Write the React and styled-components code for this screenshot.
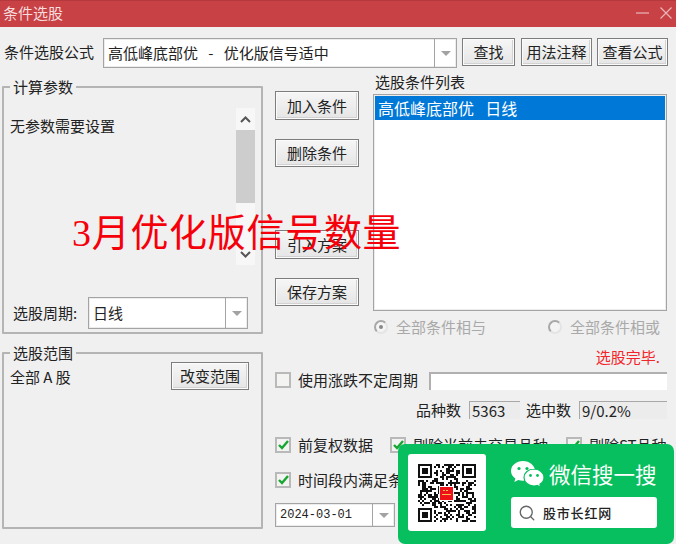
import React from "react";
import styled, { createGlobalStyle } from "styled-components";
import { Search } from "lucide-react";

const GlobalStyle = createGlobalStyle`
  html, body { margin: 0; padding: 0; background: #f0f0f0; }
  * { box-sizing: border-box; }
`;

const Dialog = styled.div`
  position: relative;
  width: 676px;
  height: 544px;
  overflow: hidden;
  background: #f0f0f0;
  color: #222;
  font: 15px/20px "Noto Sans CJK SC", "Liberation Sans", sans-serif;
`;

const TitleBar = styled.header`
  height: 27px;
  display: flex;
  align-items: center;
  justify-content: space-between;
  padding: 0 4px 2px 3px;
  background: #c84145;
  border-top: 1px solid #b5383c;
  color: #f6dcdc;
`;

const WindowControls = styled.div`
  display: flex;
  align-items: center;
  gap: 10px;
  color: #e9b6b8;
`;

const Toolbar = styled.div`
  height: 45px;
  display: flex;
  align-items: flex-start;
  padding: 11px 0 0 4px;
`;

const ToolbarLabel = styled.span`
  width: 99px;
  line-height: 28px;
`;

const Combo = styled.div`
  display: flex;
  align-items: stretch;
  width: ${(p) => p.$width}px;
  height: ${(p) => p.$height}px;
  background: #fff;
  border: 1px solid #a4a4a4;
  box-shadow: inset 0 0 0 1px #ececec;
`;

const ComboValue = styled.span`
  flex: 1;
  padding-left: 4px;
  white-space: pre;
  word-spacing: ${(p) => (p.$mono ? 0 : 1.75)}px;
  align-self: center;
  font-family: ${(p) => (p.$mono ? '"Liberation Mono", monospace' : "inherit")};
  font-size: ${(p) => (p.$mono ? "12px" : "15px")};
`;

const ComboArrow = styled.span`
  width: 22px;
  flex: none;
  border-left: 1px solid #a4a4a4;
  display: flex;
  align-items: center;
  justify-content: center;
  &::after {
    content: "";
    border-left: 5px solid transparent;
    border-right: 5px solid transparent;
    border-top: 5px solid #a2a2a2;
  }
`;

const Button = styled.button`
  flex: none;
  padding: 0;
  width: ${(p) => p.$width}px;
  height: ${(p) => p.$height || 28}px;
  margin-left: ${(p) => p.$gap || 0}px;
  border: 1px solid #7d7d7d;
  box-shadow: inset 0 0 0 1px #fbfbfb, inset -1px -1px 0 1px #d2d2d2;
  background: linear-gradient(#f6f6f6, #e5e5e5);
  color: #222;
  font: inherit;
`;

const Body = styled.div`
  display: flex;
  padding-left: 2px;
`;

const LeftColumn = styled.div`
  width: 261px;
  padding-top: 5px;
  display: flex;
  flex-direction: column;
  gap: 9px;
`;

const Group = styled.fieldset`
  margin: 0;
  min-width: 0;
  height: ${(p) => p.$height}px;
  padding: ${(p) => p.$top}px 6px 0 6px;
  border: 2px solid #b4b4b4;
  border-radius: 1px;
`;

const GroupTitle = styled.legend`
  margin-left: 0;
  padding: 0 3px;
  line-height: 20px;
`;

const ParamPane = styled.div`
  display: flex;
  justify-content: space-between;
  height: 157px;
`;

const ParamNote = styled.span`
  margin-top: 8px;
`;

const ScrollBar = styled.div`
  width: 19px;
  display: flex;
  flex-direction: column;
  background: #f7f7f7;
`;

const ScrollStep = styled.div`
  height: 22px;
  display: flex;
  align-items: center;
  justify-content: center;
  color: #555;
`;

const ScrollThumb = styled.div`
  height: 73px;
  background: #cdcdcd;
`;

const ScrollRest = styled.div`
  flex: 1;
`;

const PeriodRow = styled.div`
  display: flex;
  align-items: center;
  margin-top: 32px;
  padding-left: 3px;
`;

const PeriodLabel = styled.span`
  width: 75px;
`;

const RangeRow = styled.div`
  display: flex;
  justify-content: space-between;
  align-items: flex-start;
  margin-top: -1px;
  padding-right: 6px;
`;

const RangeText = styled.span`
  margin-top: 5px;
  white-space: pre;
`;

const RightRegion = styled.div`
  width: 392px;
  margin-left: 12px;
`;

const TopSection = styled.div`
  display: flex;
`;

const ActionColumn = styled.div`
  width: 84px;
  padding-top: 19px;
  display: flex;
  flex-direction: column;
  gap: 63px;
`;

const ActionGroup = styled.div`
  display: flex;
  flex-direction: column;
  gap: 19px;
`;

const ListPane = styled.div`
  width: 294px;
  margin-left: 14px;
`;

const ListLabel = styled.div`
  padding-left: 2px;
`;

const ListBox = styled.div`
  height: 217px;
  margin-top: 2px;
  padding: 1px;
  background: #fff;
  border: 1px solid #a4a4a4;
  box-shadow: inset 0 0 0 1px #ececec;
`;

const ListItem = styled.div`
  height: 24px;
  padding-left: 3px;
  background: #0078d7;
  color: #fff;
  font-size: 16px;
  line-height: 24px;
  white-space: pre;
  word-spacing: 2px;
`;

const RadioRow = styled.div`
  display: flex;
  margin: 6px 0 0 99px;
  color: #a9a9a9;
`;

const RadioOption = styled.div`
  display: flex;
  align-items: center;
  gap: 8px;
  width: ${(p) => p.$width}px;
`;

const RadioDot = styled.span`
  width: 14px;
  height: 14px;
  border-radius: 50%;
  border: 2px solid #a8a8a8;
  border-right-color: #e4e4e4;
  border-bottom-color: #e4e4e4;
  background: #f4f4f4;
  display: flex;
  align-items: center;
  justify-content: center;
  &::after {
    content: "";
    width: 4px;
    height: 4px;
    border-radius: 50%;
    background: ${(p) => (p.$on ? "#888" : "transparent")};
  }
`;

const Status = styled.div`
  margin-top: 10px;
  padding-right: 7px;
  text-align: right;
  color: #f2252b;
`;

const Row = styled.div`
  display: flex;
  align-items: center;
  margin-top: ${(p) => p.$top}px;
  justify-content: ${(p) => (p.$end ? "flex-end" : "flex-start")};
`;

const CheckItem = styled.label`
  display: flex;
  align-items: center;
  gap: 7px;
  flex: none;
  width: ${(p) => (p.$width ? `${p.$width}px` : "auto")};
  white-space: nowrap;
`;

const CheckBox = styled.span`
  width: 16px;
  height: 16px;
  flex: none;
  display: flex;
  align-items: center;
  justify-content: center;
  border: 2px solid #b9b9b9;
  background: #f3f3f1;
  color: #17a631;
`;

const PeriodInput = styled.div`
  width: 238px;
  height: 18px;
  margin: 2px 0 0 11px;
  background: #fff;
  border-top: 2px solid #b0b0b0;
  border-left: 2px solid #b0b0b0;
`;

const StatLabel = styled.span`
  margin-left: ${(p) => p.$gap || 0}px;
  width: 53px;
`;

const StatValue = styled.span`
  width: ${(p) => p.$width}px;
  height: 18px;
  padding-left: 2px;
  line-height: 17px;
  background: #ececec;
  border-top: 1px solid #a8a8a8;
  border-left: 1px solid #a8a8a8;
  white-space: nowrap;
`;

const Headline = styled.div`
  position: absolute;
  left: 72px;
  top: 210px;
  color: #f5000a;
  font: 38px/46px "Liberation Serif", "Noto Sans CJK SC", serif;
  letter-spacing: 0.7px;
  white-space: nowrap;
`;

const PromoCard = styled.aside`
  position: absolute;
  left: 398px;
  top: 444px;
  width: 276px;
  height: 100px;
  display: flex;
  padding: 10px 17px 0 10px;
  background: #07bf5f;
  border-radius: 7px;
`;

const QrTile = styled.div`
  width: 78px;
  height: 77px;
  flex: none;
  display: flex;
  align-items: center;
  justify-content: center;
  background: #fff;
  border-radius: 3px;
`;

const PromoBody = styled.div`
  flex: 1;
  margin-left: 25px;
  display: flex;
  flex-direction: column;
`;

const PromoHead = styled.div`
  height: 40px;
  margin-bottom: 3px;
  display: flex;
  align-items: center;
  gap: 5px;
  color: #fff;
  font-size: 21.5px;
  white-space: nowrap;
`;

const SearchField = styled.div`
  height: 31px;
  display: flex;
  align-items: center;
  gap: 7px;
  padding-left: 7px;
  background: #fff;
  border-radius: 3px;
  color: #222;
  font-size: 13px;
  font-weight: 500;
  letter-spacing: 0.8px;
`;

const Chevron = ({ up }) => (
  <svg width="11" height="7" viewBox="0 0 11 7" fill="none" stroke="currentColor" strokeWidth="2">
    <path d={up ? "M1 6l4.5-4.5L10 6" : "M1 1l4.5 4.5L10 1"} />
  </svg>
);

const Tick = () => (
  <svg width="11" height="10" viewBox="0 0 11 10" fill="none" stroke="currentColor" strokeWidth="2.4">
    <path d="M1 5l3 3 6-7" />
  </svg>
);

// Pseudo-random modules with three finder squares for the scan code
const qrModules = () => {
  const size = 29;
  const cells = [];
  let seed = 9173;
  const inFinder = (x, y) =>
    (x < 8 && y < 8) || (x > size - 9 && y < 8) || (x < 8 && y > size - 9);
  for (let y = 0; y < size; y++) {
    for (let x = 0; x < size; x++) {
      seed = (seed * 1103515245 + 12345) & 0x7fffffff;
      const bit = (seed >> 16) & 1;
      if (!inFinder(x, y) && bit) cells.push(`M${x} ${y}h1v1h-1z`);
    }
  }
  [[0, 0], [22, 0], [0, 22]].forEach(([x, y]) => {
    cells.push(`M${x} ${y}h7v7h-7zM${x + 1} ${y + 1}v5h5v-5z`);
    cells.push(`M${x + 2} ${y + 2}h3v3h-3z`);
  });
  return cells.join("");
};

const QrCode = () => (
  <svg width="58" height="58" viewBox="0 0 29 29" shapeRendering="crispEdges">
    <path d={qrModules()} fill="#111" fillRule="evenodd" />
    <rect x="10.5" y="11" width="7.5" height="7.5" fill="#fff" />
    <rect x="11" y="11.5" width="6.5" height="6.5" fill="#ee1218" />
    <path d="M12.500 13h1v.6h-1zM14 13h1v.6h-1zM12 15h4.500v.7H12z" fill="#f5c04a" />
  </svg>
);

const WeChatMark = () => (
  <svg width="33" height="27" viewBox="0 0 33 27">
    <path d="M12 0C5.4 0 0 4.4 0 9.9c0 3.1 1.7 5.8 4.4 7.6L3.3 21l4-2.1c1.5.5 3 .8 4.7.8 6.6 0 12-4.4 12-9.8S18.6 0 12 0z" fill="#fff" />
    <circle cx="8" cy="7.5" r="1.6" fill="#07bf5f" />
    <circle cx="16" cy="7.5" r="1.6" fill="#07bf5f" />
    <path d="M23 8c-5.6 0-10 3.8-10 8.5S17.4 25 23 25c1.2 0 2.300-.2 3.400-.5l3.400 2-.9-3.200c2.500-1.500 4.100-4 4.100-6.800C33 11.800 28.600 8 23 8z" fill="#fff" stroke="#07bf5f" strokeWidth="1.2" />
    <circle cx="19.500" cy="14.500" r="1.400" fill="#07bf5f" />
    <circle cx="26.500" cy="14.500" r="1.400" fill="#07bf5f" />
  </svg>
);

export default function App() {
  return (
    <Dialog>
      <GlobalStyle />
      <TitleBar>
        <span>条件选股</span>
        <WindowControls>
          <svg width="14" height="12" viewBox="0 0 14 12" stroke="currentColor" strokeWidth="1.2">
            <path d="M0 6h13" />
          </svg>
          <svg width="12" height="12" viewBox="0 0 12 12" stroke="currentColor" strokeWidth="1.2">
            <path d="M.5.5l11 11M11.500.5l-11 11" />
          </svg>
        </WindowControls>
      </TitleBar>

      <Toolbar>
        <ToolbarLabel>条件选股公式</ToolbarLabel>
        <Combo $width={354} $height={30}>
          <ComboValue>{"高低峰底部优  -  优化版信号适中"}</ComboValue>
          <ComboArrow />
        </Combo>
        <Button $width={53} $gap={5}>查找</Button>
        <Button $width={71} $gap={6}>用法注释</Button>
        <Button $width={71} $gap={5}>查看公式</Button>
      </Toolbar>

      <Body>
        <LeftColumn>
          <Group $height={257} $top={11}>
            <GroupTitle>计算参数</GroupTitle>
            <ParamPane>
              <ParamNote>无参数需要设置</ParamNote>
              <ScrollBar>
                <ScrollStep><Chevron up /></ScrollStep>
                <ScrollThumb />
                <ScrollRest />
                <ScrollStep><Chevron /></ScrollStep>
              </ScrollBar>
            </ParamPane>
            <PeriodRow>
              <PeriodLabel>选股周期:</PeriodLabel>
              <Combo $width={160} $height={32}>
                <ComboValue>日线</ComboValue>
                <ComboArrow />
              </Combo>
            </PeriodRow>
          </Group>
          <Group $height={186} $top={0}>
            <GroupTitle>选股范围</GroupTitle>
            <RangeRow>
              <RangeText>全部 A 股</RangeText>
              <Button $width={78}>改变范围</Button>
            </RangeRow>
          </Group>
        </LeftColumn>

        <RightRegion>
          <TopSection>
            <ActionColumn>
              <ActionGroup>
                <Button $width={84} $height={29}>加入条件</Button>
                <Button $width={84}>删除条件</Button>
              </ActionGroup>
              <ActionGroup>
                <Button $width={84} $height={29}>引入方案</Button>
                <Button $width={84}>保存方案</Button>
              </ActionGroup>
            </ActionColumn>
            <ListPane>
              <ListLabel>选股条件列表</ListLabel>
              <ListBox>
                <ListItem>{"高低峰底部优  日线"}</ListItem>
              </ListBox>
            </ListPane>
          </TopSection>

          <RadioRow>
            <RadioOption $width={174}>
              <RadioDot $on />
              全部条件相与
            </RadioOption>
            <RadioOption>
              <RadioDot />
              全部条件相或
            </RadioOption>
          </RadioRow>

          <Status>选股完毕.</Status>

          <Row $top={3}>
            <CheckItem>
              <CheckBox />
              使用涨跌不定周期
            </CheckItem>
            <PeriodInput />
          </Row>

          <Row $top={10} $end>
            <StatLabel>品种数</StatLabel>
            <StatValue $width={51}>5363</StatValue>
            <StatLabel $gap={6}>选中数</StatLabel>
            <StatValue $width={88}>9/0.2%</StatValue>
          </Row>

          <Row $top={15}>
            <CheckItem $width={115}>
              <CheckBox><Tick /></CheckBox>
              前复权数据
            </CheckItem>
            <CheckItem $width={176}>
              <CheckBox><Tick /></CheckBox>
              剔除当前未交易品种
            </CheckItem>
            <CheckItem>
              <CheckBox><Tick /></CheckBox>
              剔除ST品种
            </CheckItem>
          </Row>

          <Row $top={15}>
            <CheckItem>
              <CheckBox><Tick /></CheckBox>
              时间段内满足条件
            </CheckItem>
          </Row>

          <Row $top={13}>
            <Combo $width={120} $height={24}>
              <ComboValue $mono>2024-03-01</ComboValue>
              <ComboArrow />
            </Combo>
          </Row>
        </RightRegion>
      </Body>

      <Headline>3月优化版信号数量</Headline>

      <PromoCard>
        <QrTile>
          <QrCode />
        </QrTile>
        <PromoBody>
          <PromoHead>
            <WeChatMark />
            微信搜一搜
          </PromoHead>
          <SearchField>
            <Search size={18} color="#666" strokeWidth={1.8} />
            股市长红网
          </SearchField>
        </PromoBody>
      </PromoCard>
    </Dialog>
  );
}
